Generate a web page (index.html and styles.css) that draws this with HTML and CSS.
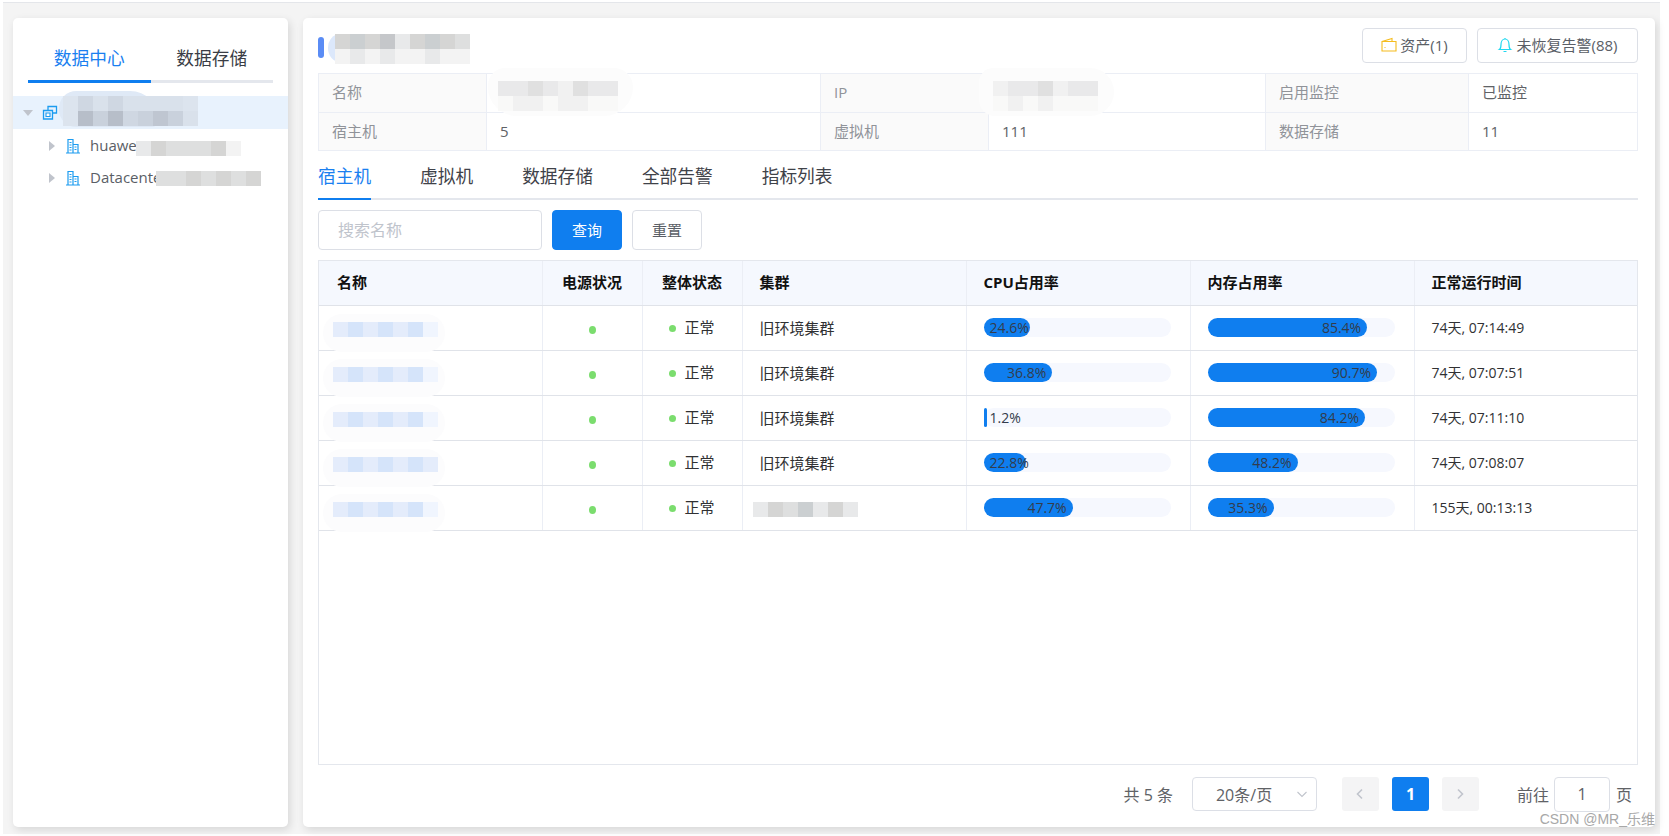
FILE: index.html
```html
<!DOCTYPE html>
<html lang="zh-CN">
<head>
<meta charset="utf-8">
<title>数据中心</title>
<link rel="stylesheet" href="styles.css">
</head>
<body>
<div class="page">
  <aside class="side card">
    <div class="side-tabs">
      <div class="side-tab active">数据中心</div>
      <div class="side-tab">数据存储</div>
    </div>
    <ul class="tree">
      <li class="tree-row root">
        <span class="caret down"></span>
        <svg class="ticon" viewBox="0 0 16 16"><path d="M6 1.500h8.500v6.500H10.500V5.500H6zM1.500 5.500H10.500V14H1.500z" fill="none" stroke="#1c9cf0" stroke-width="1.300"/><path d="M4 8h4v3.500H4z" fill="#fff" stroke="#1c9cf0" stroke-width="1.100"/></svg>
        <span class="blob blob-root"></span>
        <span class="mosaic m-root"><i class="a1"></i><i class="a3"></i><i class="a2"></i><i class="a3"></i><i class="a2"></i><i class="a2"></i><i class="a2"></i><i class="a2"></i><i class="a1"></i><i class="a1"></i><i class="a6"></i><i class="a4"></i><i class="a6"></i><i class="a3"></i><i class="a4"></i><i class="a5"></i><i class="a4"></i><i class="a2"></i></span>
      </li>
      <li class="tree-row child">
        <span class="caret"></span>
        <svg class="ticon b" viewBox="0 0 16 16"><path d="M1 15h14M3 15V1.500h5V15M8 6.500h5V15M4.500 4.500h2M4.500 7h2M4.500 9.500h2M4.500 12h2M9.500 9h2M9.500 11.500h2" fill="none" stroke="#1c9cf0" stroke-width="1.200"/></svg>
        <span class="tree-text">huawe</span>
        <span class="mosaic row1 short s1"><i class="g1"></i><i class="g3"></i><i class="g2"></i><i class="g2"></i><i class="g2"></i><i class="g3"></i><i class="g0"></i></span>
      </li>
      <li class="tree-row child">
        <span class="caret"></span>
        <svg class="ticon b" viewBox="0 0 16 16"><path d="M1 15h14M3 15V1.500h5V15M8 6.500h5V15M4.500 4.500h2M4.500 7h2M4.500 9.500h2M4.500 12h2M9.500 9h2M9.500 11.500h2" fill="none" stroke="#1c9cf0" stroke-width="1.200"/></svg>
        <span class="tree-text clip">Datacente</span>
        <span class="mosaic row1 short s2"><i class="g2"></i><i class="g2"></i><i class="g3"></i><i class="g2"></i><i class="g3"></i><i class="g2"></i><i class="g3"></i></span>
      </li>
    </ul>
  </aside>

  <main class="main card">
    <header class="head">
      <div class="head-title">
        <span class="pill"></span>
        <span class="blob blob-title"></span>
        <span class="mosaic m-title"><i class="g3"></i><i class="g4"></i><i class="g3"></i><i class="g5"></i><i class="g1"></i><i class="g3"></i><i class="g4"></i><i class="g3"></i><i class="g2"></i><i class="g0"></i><i class="g1"></i><i class="g0"></i><i class="g1"></i><i class="g0"></i><i class="g0"></i><i class="g1"></i><i class="g0"></i><i class="g0"></i></span>
      </div>
      <div class="head-actions">
        <button class="btn btn-asset">
          <svg class="bicon" viewBox="0 0 16 16"><path d="M1 4.500 11 1.500V4.500M1 4.500H15V14H1zM3.500 10.500h1" fill="none" stroke="#f5bc1e" stroke-width="1.100"/></svg>资产(1)
        </button>
        <button class="btn btn-alarm">
          <svg class="bicon" viewBox="0 0 16 16"><path d="M2.500 12.500c1.500-1 1.500-2 1.500-5 0-3 1.700-5.500 4-5.500s4 2.500 4 5.500c0 3 0 4 1.500 5zM6.500 14.500h3M8 1v1" fill="none" stroke="#1ed8f0" stroke-width="1.200"/></svg>未恢复告警(88)
        </button>
      </div>
    </header>

    <div class="desc">
      <div class="dl">名称</div>
      <div class="dv"><span class="smudge sm-name"></span><span class="mosaic m-desc"><i class="n2"></i><i class="n2"></i><i class="n3"></i><i class="n2"></i><i class="n1"></i><i class="n3"></i><i class="n2"></i><i class="n2"></i><i class="n0"></i><i class="n1"></i><i class="n1"></i><i class="n0"></i><i class="n1"></i><i class="n1"></i><i class="n0"></i><i class="n0"></i></span></div>
      <div class="dl">IP</div>
      <div class="dv"><span class="smudge sm-ip"></span><span class="mosaic m-ip"><i class="n1"></i><i class="n2"></i><i class="n2"></i><i class="n3"></i><i class="n1"></i><i class="n2"></i><i class="n2"></i><i class="n0"></i><i class="n1"></i><i class="n0"></i><i class="n1"></i><i class="n0"></i><i class="n0"></i><i class="n0"></i></span></div>
      <div class="dl">启用监控</div>
      <div class="dv">已监控</div>
      <div class="dl">宿主机</div>
      <div class="dv">5</div>
      <div class="dl">虚拟机</div>
      <div class="dv">111</div>
      <div class="dl">数据存储</div>
      <div class="dv">11</div>
    </div>

    <nav class="tabs">
      <div class="tab active">宿主机</div>
      <div class="tab">虚拟机</div>
      <div class="tab">数据存储</div>
      <div class="tab">全部告警</div>
      <div class="tab">指标列表</div>
    </nav>

    <form class="filter">
      <input class="search" type="text" placeholder="搜索名称">
      <button class="btn primary" type="button">查询</button>
      <button class="btn plain" type="button">重置</button>
    </form>

    <div class="table-wrap">
      <table class="grid">
        <colgroup>
          <col class="c-name"><col class="c-s"><col class="c-s"><col class="c-w"><col class="c-w"><col class="c-w"><col>
        </colgroup>
        <thead>
          <tr>
            <th class="pad-name">名称</th><th class="center">电源状况</th><th class="center">整体状态</th><th>集群</th><th>CPU占用率</th><th>内存占用率</th><th>正常运行时间</th>
          </tr>
        </thead>
        <tbody>
          <tr>
            <td class="pad-m"><span class="mosaic row1 blue"><i class="b1"></i><i class="b2"></i><i class="b1"></i><i class="b2"></i><i class="b1"></i><i class="b2"></i><i class="b0"></i></span></td>
            <td class="center"><span class="dot low"></span></td>
            <td class="center"><span class="dot"></span><span class="st">正常</span></td>
            <td>旧环境集群</td>
            <td><div class="bar"><div class="fill" style="width:24.6%"><span>24.6%</span></div></div></td>
            <td><div class="bar"><div class="fill" style="width:85.4%"><span>85.4%</span></div></div></td>
            <td>74天, 07:14:49</td>
          </tr>
          <tr>
            <td class="pad-m"><span class="mosaic row1 blue"><i class="b1"></i><i class="b2"></i><i class="b1"></i><i class="b2"></i><i class="b1"></i><i class="b2"></i><i class="b0"></i></span></td>
            <td class="center"><span class="dot low"></span></td>
            <td class="center"><span class="dot"></span><span class="st">正常</span></td>
            <td>旧环境集群</td>
            <td><div class="bar"><div class="fill" style="width:36.8%"><span>36.8%</span></div></div></td>
            <td><div class="bar"><div class="fill" style="width:90.7%"><span>90.7%</span></div></div></td>
            <td>74天, 07:07:51</td>
          </tr>
          <tr>
            <td class="pad-m"><span class="mosaic row1 blue"><i class="b1"></i><i class="b2"></i><i class="b1"></i><i class="b2"></i><i class="b1"></i><i class="b2"></i><i class="b0"></i></span></td>
            <td class="center"><span class="dot low"></span></td>
            <td class="center"><span class="dot"></span><span class="st">正常</span></td>
            <td>旧环境集群</td>
            <td><div class="bar"><div class="fill" style="width:1.2%"><span>1.2%</span></div></div></td>
            <td><div class="bar"><div class="fill" style="width:84.2%"><span>84.2%</span></div></div></td>
            <td>74天, 07:11:10</td>
          </tr>
          <tr>
            <td class="pad-m"><span class="mosaic row1 blue"><i class="b1"></i><i class="b2"></i><i class="b1"></i><i class="b2"></i><i class="b1"></i><i class="b2"></i><i class="b1"></i></span></td>
            <td class="center"><span class="dot low"></span></td>
            <td class="center"><span class="dot"></span><span class="st">正常</span></td>
            <td>旧环境集群</td>
            <td><div class="bar"><div class="fill" style="width:22.8%"><span>22.8%</span></div></div></td>
            <td><div class="bar"><div class="fill" style="width:48.2%"><span>48.2%</span></div></div></td>
            <td>74天, 07:08:07</td>
          </tr>
          <tr>
            <td class="pad-m"><span class="mosaic row1 blue"><i class="b1"></i><i class="b2"></i><i class="b1"></i><i class="b2"></i><i class="b1"></i><i class="b2"></i><i class="b0"></i></span></td>
            <td class="center"><span class="dot low"></span></td>
            <td class="center"><span class="dot"></span><span class="st">正常</span></td>
            <td class="pad-c"><span class="mosaic row1"><i class="g1"></i><i class="g3"></i><i class="g2"></i><i class="g4"></i><i class="g1"></i><i class="g3"></i><i class="g1"></i></span></td>
            <td><div class="bar"><div class="fill" style="width:47.7%"><span>47.7%</span></div></div></td>
            <td><div class="bar"><div class="fill" style="width:35.3%"><span>35.3%</span></div></div></td>
            <td>155天, 00:13:13</td>
          </tr>
        </tbody>
      </table>
    </div>

    <footer class="pager">
      <span class="total">共 5 条</span>
      <div class="size">20条/页<svg class="chev" viewBox="0 0 12 12"><path d="M1.500 4 6 8.500 10.500 4" fill="none" stroke="#c0c4cc" stroke-width="1.100"/></svg></div>
      <div class="pbtn prev"><svg class="pico" viewBox="0 0 12 12"><path d="M8 1.500 3.500 6 8 10.500" fill="none" stroke="#c0c4cc" stroke-width="1.600"/></svg></div>
      <div class="pbtn cur">1</div>
      <div class="pbtn next"><svg class="pico" viewBox="0 0 12 12"><path d="M4 1.500 8.500 6 4 10.500" fill="none" stroke="#c0c4cc" stroke-width="1.600"/></svg></div>
      <span class="goto">前往</span>
      <div class="jump">1</div>
      <span class="goto-end">页</span>
    </footer>
    <div class="mark">CSDN @MR_乐维</div>
  </main>
</div>
</body>
</html>
```
FILE: styles.css
```css
* { box-sizing: border-box; }
html, body { margin: 0; padding: 0; height: 100%; background: #fff; overflow: hidden; }
body {
  font-family: "Open Sans", "Noto Sans CJK SC", sans-serif;
  font-size: 15px;
  color: #4a4d55;
}
.page {
  width: 1657px;
  height: 832px;
  margin: 2px 0 0 3px;
  border-top: 1px solid #e4e6ea;
  background: #f4f4f4;
  padding: 15px 5px 7px 10px;
  display: flex;
  gap: 15px;
}
.card {
  background: #fff;
  border-radius: 5px;
  box-shadow: 2px 3px 8px rgba(0, 0, 0, .12);
}
.side { width: 275px; flex: none; padding-top: 21px; }
.side-tabs { display: flex; margin: 0 15px; }
.side-tab {
  flex: 1;
  text-align: center;
  font-size: 17.700px;
  line-height: 28px;
  height: 44px;
  padding-top: 5px;
  color: #3a3d45;
  border-bottom: 3px solid #e4e7ed;
}
.side-tab.active { color: #1a7ff0; border-bottom-color: #0f7eef; }
.tree { list-style: none; margin: 13px 0 0; padding: 0; }
.tree-row { display: flex; align-items: center; height: 32px; position: relative; }
.tree-row.root { height: 33px; background: #e8f2fd; padding-left: 10px; margin-bottom: 1px; }
.tree-row.child { padding-left: 36px; }
.caret {
  width: 0; height: 0;
  border-left: 6px solid #c0c4cc;
  border-top: 5px solid transparent;
  border-bottom: 5px solid transparent;
  margin-right: 10px;
}
.caret.down {
  border-left: 5px solid transparent;
  border-right: 5px solid transparent;
  border-top: 6px solid #c0c4cc;
  border-bottom: 0;
  margin-right: 9px;
}
.ticon { width: 16px; height: 16px; flex: none; }
.ticon.b { margin-right: 9px; }
.tree-text { font-size: 15px; font-weight: 500; color: #5a5e66; line-height: 20px; padding-bottom: 2px; white-space: nowrap; }
.tree-text.clip { width: 67px; }

.mosaic { display: inline-grid; grid-template-columns: repeat(7, 15px); grid-auto-rows: 15px; flex: none; vertical-align: middle; position: relative; z-index: 2; }
.mosaic i { display: block; }
.mosaic.short { margin-left: -1px; }
.mosaic.s1 { margin-top: 4px; }
.mosaic.s2 { margin-top: 1px; }
.m-title { grid-template-columns: repeat(9, 15px); margin-left: 5px; top: 0; }
.m-root { position: absolute; left: 50px; top: 0; grid-template-columns: repeat(9, 15px); }
.m-desc { grid-template-columns: repeat(8, 15px); position: absolute; left: 11px; top: 7px; }
.m-ip { position: absolute; left: 4px; top: 7px; }

.blob { position: absolute; display: block; }
.blob-root { left: 46px; top: -5px; width: 100px; height: 36px; border-radius: 24px 40px 10px 24px; background: #dfe9f6; }
.blob-title { left: 10px; top: 6px; width: 24px; height: 28px; border-radius: 50%; background: #dce8fb; }
.smudge { position: absolute; z-index: 1; display: block; background: #fcfcfc; }
.sm-name { left: 1px; top: -6px; width: 145px; height: 48px; border-radius: 18px 20px 30px 30px; }
.sm-ip { left: -10px; top: -6px; width: 135px; height: 48px; border-radius: 18px 30px 30px 20px; }

.a1 { background: #dce4ee; } .a2 { background: #d9e1eb; } .a3 { background: #cfd7e2; } .a4 { background: #c9d1dc; } .a5 { background: #bfc6d1; } .a6 { background: #b7bec9; }
.g0 { background: #f3f3f3; } .g1 { background: #e8e9ea; } .g2 { background: #dedfdf; } .g3 { background: #d5d5d4; } .g4 { background: #cbcfd1; } .g5 { background: #c5c7ca; }
.b0 { background: #f0f5fe; } .b1 { background: #e4ecfb; } .b2 { background: #d5e4fa; }
.n0 { background: #f9f9f8; } .n1 { background: #f1f1f1; } .n2 { background: #e9e9ea; } .n3 { background: #e0e0e0; }

.main { flex: 1; padding: 10px 17px 16px 15px; display: flex; flex-direction: column; position: relative; min-width: 0; }
.head { display: flex; justify-content: space-between; height: 35px; flex: none; }
.head-title { position: relative; display: flex; align-items: flex-start; padding-top: 6px; }
.pill { width: 6px; height: 21px; margin-top: 3px; background: #5a8cf5; border-radius: 3px; margin-right: 6px; }
.head-actions { display: flex; gap: 10px; }
.btn {
  font: inherit;
  height: 35px;
  border: 1px solid #dcdfe6;
  border-radius: 4px;
  background: #fff;
  color: #5a5e66;
  display: inline-flex;
  align-items: center;
  justify-content: center;
  padding: 0 0 2px;
}
.btn-asset { width: 105px; }
.btn-alarm { width: 161px; }
.bicon { width: 16px; height: 16px; margin-right: 3px; flex: none; }

.desc {
  flex: none;
  margin-top: 10px;
  display: grid;
  grid-template-columns: 168px 334px 168px 277px 203px 169px;
  grid-auto-rows: 38.500px;
  border: 1px solid #ebeef5;
  border-right: 0;
  border-bottom: 0;
}
.dl, .dv {
  padding-left: 13px;
  line-height: 36px;
  border-right: 1px solid #ebeef5;
  border-bottom: 1px solid #ebeef5;
  position: relative;
}
.dl { background: #fafafa; color: #909399; }
.dv { color: #606266; }

.tabs { flex: none; height: 49px; display: flex; gap: 49px; border-bottom: 2px solid #e4e7ed; }
.tab { font-size: 17.700px; color: #3f4249; line-height: 27px; padding-top: 12px; height: 49px; }
.tab.active { color: #1a7ff0; border-bottom: 2px solid #0f7eef; }

.filter { flex: none; margin-top: 10px; display: flex; gap: 10px; height: 40px; }
.search {
  width: 224px;
  height: 40px;
  border: 1px solid #dcdfe6;
  border-radius: 4px;
  padding: 0 19px;
  font: inherit;
  font-size: 16px;
  outline: 0;
}
.search::placeholder { color: #c0c4cc; opacity: 1; }
.filter .btn { height: 40px; width: 70px; }
.btn.primary { background: #0f7eef; border-color: #0f7eef; color: #fff; }
.btn.plain { color: #5a5e66; }

.table-wrap { flex: 1; margin-top: 10px; border: 1px solid #e4e7ed; min-height: 0; }
.grid { width: 100%; border-collapse: collapse; table-layout: fixed; }
.c-name { width: 223px; } .c-s { width: 100px; } .c-w { width: 224px; }
.grid th {
  height: 44px;
  background: #f5f8fe;
  color: #111;
  font-weight: 700;
  text-align: left;
  padding: 0 17px 2px;
  border-right: 1px solid #ebeef5;
  border-bottom: 1px solid #e0e3e9;
}
.grid td {
  height: 45px;
  padding: 0 17px 1px;
  color: #303133;
  border-right: 1px solid #ebeef5;
  border-bottom: 1px solid #e0e3e9;
}
.grid th:last-child, .grid td:last-child { border-right: 0; }
.grid td:last-child { font-size: 14px; }
.grid .center { text-align: center; padding: 0 0 1px; }
.grid th.center { padding-bottom: 2px; }
.grid .pad-name { padding-left: 18px; }
.grid .pad-m { padding: 1px 0 0 14px; position: relative; }
.grid .pad-m::before { content: ""; position: absolute; left: 4px; top: 8px; width: 122px; height: 38px; border-radius: 20px; background: #fcfcfd; }
.grid .pad-c { padding: 1px 0 0 10px; }
.dot { display: inline-block; width: 7px; height: 7px; background: #7bdd6e; border-radius: 50%; vertical-align: 2px; }
.dot.low { height: 8px; vertical-align: -1px; }
.st { margin-left: 8px; vertical-align: 1px; }
.bar { height: 19px; width: 187px; background: #f6f8fe; border-radius: 10px; }
.fill { height: 19px; min-width: 3px; background: #0f7eef; border-radius: 10px; }
.fill span { display: block; padding: 0 6px; text-align: right; white-space: nowrap; font-size: 14px; line-height: 19px; color: #333c4c; }

.pager { flex: none; margin-top: 12px; height: 34px; display: flex; align-items: center; font-size: 16px; color: #606266; padding-right: 6px; justify-content: flex-end; }
.total { margin-right: 19px; }
.size {
  width: 125px; height: 34px; border: 1px solid #dcdfe6; border-radius: 4px;
  display: flex; align-items: center; padding-left: 23px; position: relative; margin-right: 25px;
}
.chev { width: 12px; height: 12px; position: absolute; right: 8px; top: 10px; }
.pbtn { width: 37px; height: 34px; border-radius: 3px; background: #f4f4f5; display: flex; align-items: center; justify-content: center; }
.pico { width: 12px; height: 12px; }
.pbtn.cur { background: #0f7eef; color: #fff; font-weight: 700; margin: 0 13px; }
.goto { margin-left: 38px; margin-right: 5px; }
.jump { width: 56px; height: 35px; border: 1px solid #dcdfe6; border-radius: 4px; text-align: center; line-height: 32px; }
.goto-end { margin-left: 6px; }
.mark { position: absolute; right: 0; bottom: 0; font-family: "Liberation Sans", "Noto Sans CJK SC", sans-serif; font-size: 14px; color: #a8a8a8; line-height: 16px; }
```
